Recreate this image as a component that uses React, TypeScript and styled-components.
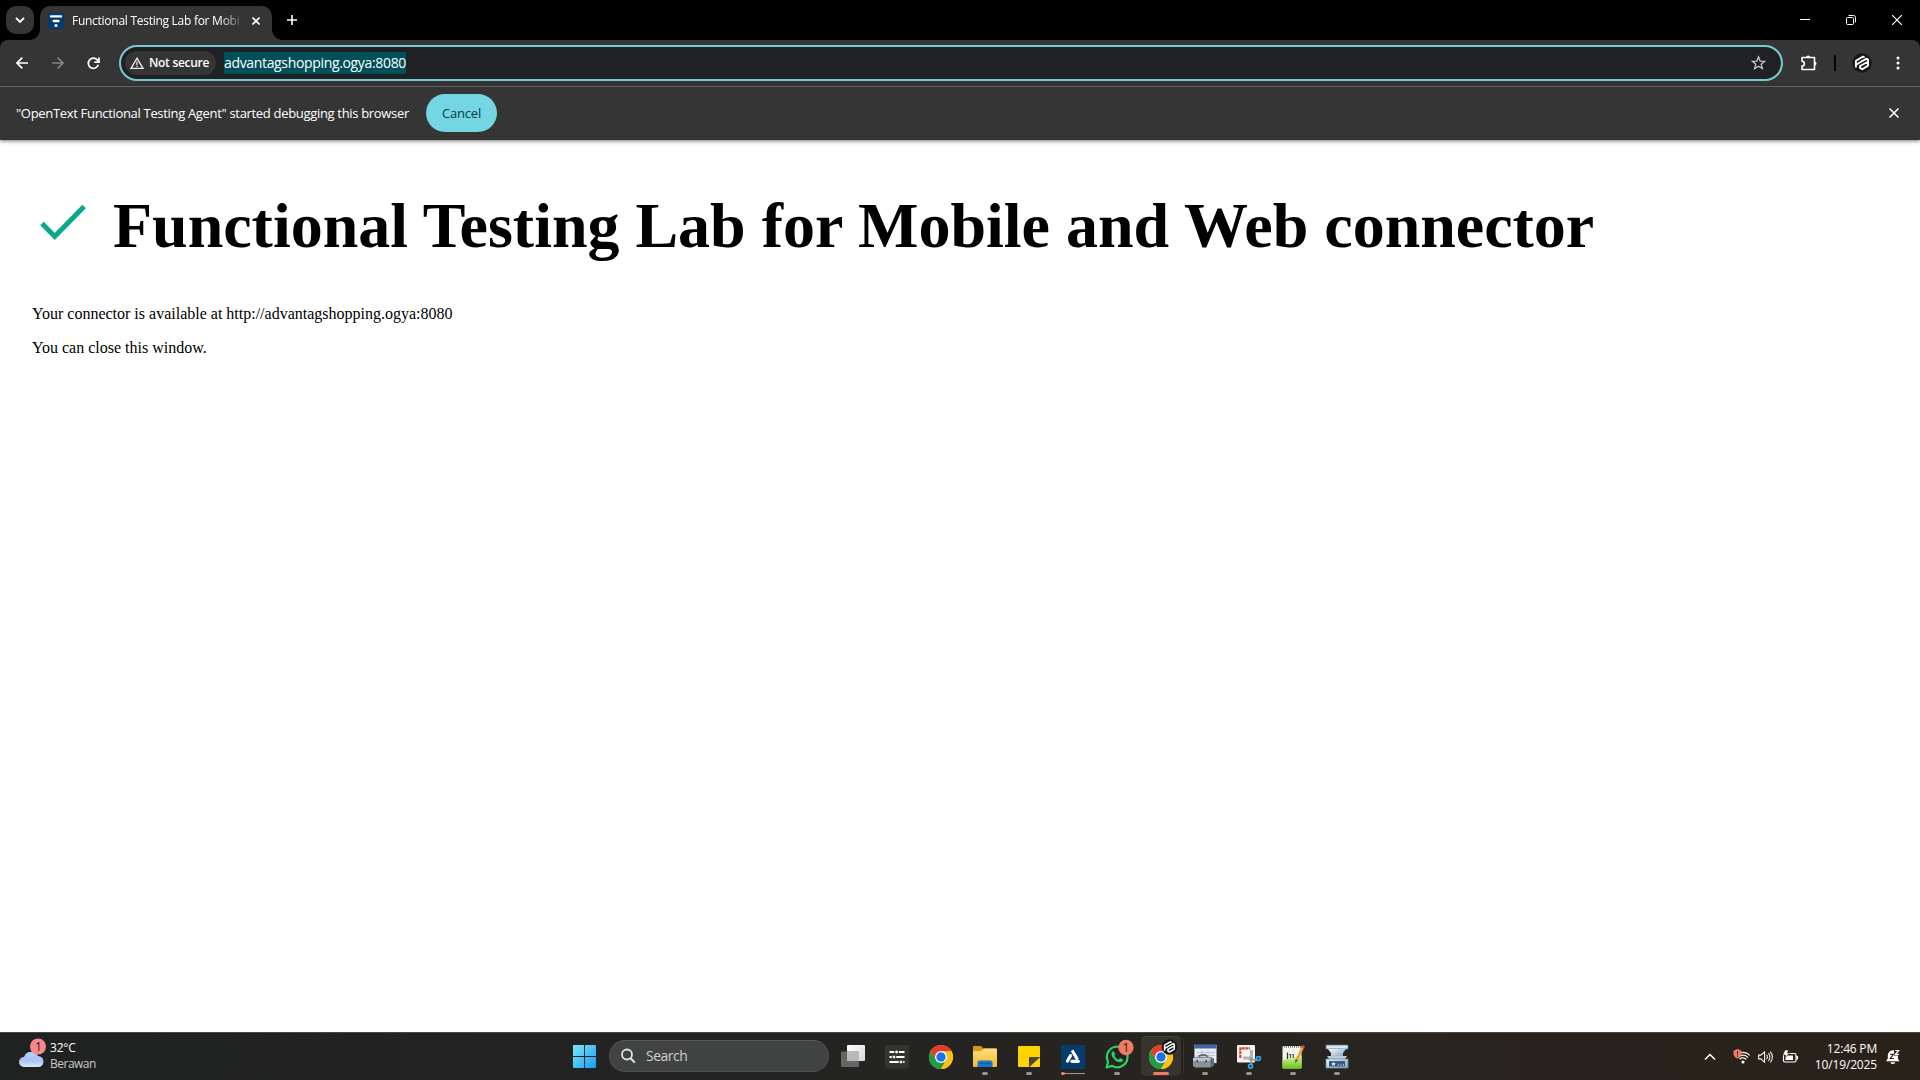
import React from "react";
import styled, { createGlobalStyle } from "styled-components";

const Global = createGlobalStyle`
  * { box-sizing: border-box; }
  html, body { margin: 0; padding: 0; background: #fff; overflow: hidden; }
`;

const UI = `"Segoe UI", "Open Sans", "Noto Sans", sans-serif`;

const Screen = styled.div`
  width: 1920px;
  height: 1080px;
  display: flex;
  flex-direction: column;
  font-family: ${UI};
  background: #fff;
  overflow: hidden;
`;

const Label = styled.span<{ $size: number; $track?: number; $color?: string; $weight?: number }>`
  font-size: ${(p) => p.$size}px;
  letter-spacing: ${(p) => p.$track ?? 0}px;
  color: ${(p) => p.$color ?? "#fff"};
  font-weight: ${(p) => p.$weight ?? 400};
  line-height: 16px;
  white-space: nowrap;
`;

const TabStrip = styled.header`
  height: 40px;
  flex: none;
  display: flex;
  align-items: flex-start;
  background: #000;
  padding: 6px 0 0 6px;
`;

const TabSearch = styled.button`
  width: 28px;
  height: 28px;
  border: 0;
  padding: 0;
  border-radius: 10px;
  background: #353535;
  display: grid;
  place-items: center;
`;

const Tab = styled.div`
  position: relative;
  width: 232px;
  height: 34px;
  margin-left: 6px;
  padding: 0 6px 4px 8px;
  display: flex;
  align-items: center;
  background: #353535;
  border-radius: 10px 10px 0 0;
  &::before, &::after {
    content: "";
    position: absolute;
    bottom: 0;
    width: 10px;
    height: 10px;
  }
  &::before { left: -10px; background: radial-gradient(circle at 0 0, transparent 9.5px, #353535 10px); }
  &::after { right: -10px; background: radial-gradient(circle at 100% 0, transparent 9.5px, #353535 10px); }
`;

const TabTitle = styled.div`
  width: 172px;
  margin-left: 8px;
  line-height: 16px;
  display: flex;
  mask-image: linear-gradient(to right, #000 148px, transparent 172px);
`;

const TabClose = styled.div`
  width: 20px;
  height: 20px;
  margin-left: 2px;
  display: grid;
  place-items: center;
`;

const NewTab = styled.div`
  width: 28px;
  height: 28px;
  margin-left: 6px;
  display: grid;
  place-items: center;
`;

const WindowButtons = styled.div`
  margin-left: auto;
  display: flex;
  height: 28px;
`;

const WindowButton = styled.div`
  width: 46px;
  display: grid;
  place-items: center;
`;

const ToolbarBack = styled.div`
  background: #000;
  flex: none;
`;

const Toolbar = styled.div`
  height: 47px;
  background: #353535;
  border-radius: 8px 8px 0 0;
  border-bottom: 1px solid #727272;
  display: flex;
  align-items: center;
`;

const NavIcons = styled.div`
  display: flex;
  padding-left: 4px;
  width: 119px;
`;

const IconCell = styled.div<{ $w: number }>`
  width: ${(p) => p.$w}px;
  display: flex;
  justify-content: center;
  align-items: center;
`;

const AddressBar = styled.div`
  width: 1664px;
  height: 36px;
  border: 2px solid #78c9d1;
  border-radius: 18px;
  background: #202125;
  display: flex;
  align-items: center;
  padding: 0 10px 0 4px;
`;

const SecurityChip = styled.div`
  width: 91px;
  height: 24px;
  border-radius: 12px;
  background: #353535;
  display: flex;
  align-items: center;
  gap: 5px;
  padding-left: 5px;
`;

const SelectedUrl = styled.div`
  margin-left: 8px;
  height: 22px;
  width: 182px;
  background: #004f59;
  display: flex;
  align-items: center;
`;

const Star = styled.div`
  margin-left: auto;
  height: 20px;
  display: flex;
  align-items: center;
`;

const ToolbarEnd = styled.div`
  flex: 1;
  display: flex;
  align-items: center;
  padding-left: 10px;
`;

const Separator = styled.div`
  width: 2px;
  height: 16px;
  background: #050505;
  margin: 0 9px 0 10px;
`;

const InfoBar = styled.div`
  height: 53px;
  flex: none;
  background: #353535;
  display: flex;
  align-items: center;
  padding: 0 16px 2px;
  z-index: 1;
  box-shadow: 0 1px 4px rgba(0, 0, 0, 0.55);
`;

const InfoText = styled.div`
  width: 410px;
  display: flex;
`;

const CancelButton = styled.button`
  width: 71px;
  height: 38px;
  border: 0;
  padding: 0;
  border-radius: 19px;
  background: #74d5e3;
  font-family: inherit;
`;

const InfoClose = styled.div`
  margin-left: auto;
  width: 20px;
  display: grid;
  place-items: center;
`;

const Page = styled.main`
  flex: 1;
  padding: 44px 32px;
  font-family: "Liberation Serif", "Times New Roman", serif;
  color: #000;
`;

const Heading = styled.div`
  display: flex;
  align-items: center;
  height: 84px;
  padding-left: 8px;
`;

const Title = styled.h1`
  margin: 0 0 0 25px;
  font-size: 64px;
  line-height: 74px;
  letter-spacing: -0.02px;
  white-space: nowrap;
`;

const Message = styled.p`
  margin: 0 0 16px;
  font-size: 16px;
  line-height: 18px;
`;

const Messages = styled.div`
  padding-top: 37px;
`;

const Taskbar = styled.footer`
  height: 48px;
  flex: none;
  display: flex;
  background: linear-gradient(to right, #202221 0%, #232423 40%, #28241f 70%, #282219 100%);
  border-top: 1px solid #484848;
`;

const Weather = styled.div`
  width: 562px;
  padding: 0 0 1px 18px;
  display: flex;
  align-items: center;
`;

const TextStack = styled.div<{ $end?: boolean }>`
  display: flex;
  flex-direction: column;
  align-items: ${(p) => (p.$end ? "flex-end" : "flex-start")};
`;

const AppButton = styled.div`
  position: relative;
  width: 44px;
  height: 47px;
  display: flex;
  justify-content: center;
  padding-top: 12px;
`;

const ActiveFrame = styled.div`
  position: absolute;
  left: 2px;
  top: 3px;
  width: 40px;
  height: 40px;
  border-radius: 5px;
  background: #37332f;
  box-shadow: inset 0 1px 0 #45413d, 2px 0 0 #24211d, 3px 0 0 #37332f;
`;

const Glyph = styled.svg`
  position: relative;
  overflow: visible;
  display: block;
`;

const RunMark = styled.div<{ $w: number; $c: string }>`
  position: absolute;
  bottom: 5px;
  left: calc(50% - ${(p) => p.$w / 2}px);
  width: ${(p) => p.$w}px;
  height: 3px;
  border-radius: 2px;
  background: ${(p) => p.$c};
`;

const ProgressMark = styled.div`
  position: absolute;
  bottom: 6px;
  left: 10px;
  width: 24px;
  height: 1px;
  background: #a29c98;
  &::before {
    content: "";
    position: absolute;
    left: 0;
    top: -1px;
    width: 4px;
    height: 3px;
    border-radius: 2px;
    background: #ef806a;
  }
`;

const SearchBox = styled.div`
  width: 220px;
  height: 32px;
  margin: 7px 2px 0 3px;
  border-radius: 16px;
  background: #414342;
  border: 1px solid #4d4f4e;
  border-top-color: #5a5c5b;
  display: flex;
  align-items: center;
  padding-left: 10px;
  gap: 10px;
`;

const Tray = styled.div`
  margin-left: auto;
  display: flex;
  align-items: center;
  padding: 0 19px 0 0;
`;

const Clock = styled.div`
  width: 70px;
  margin-right: 8px;
`;

function ChromeLogo() {
  return (
    <g>
      <circle cx="12" cy="12" r="12" fill="#fbc116" />
      <path d="M1.6 6A12 12 0 0 1 22.4 6H12L6.8 15Z" fill="#e33b2e" />
      <path d="M1.6 6A12 12 0 0 0 12 24L17.2 15H6.8Z" fill="#229a48" />
      <path d="M22.4 6A12 12 0 0 1 12 24L17.2 15 12 6Z" fill="#fbc116" />
      <circle cx="12" cy="12" r="6" fill="#fff" />
      <circle cx="12" cy="12" r="4.7" fill="#1a73e8" />
    </g>
  );
}

function ProfileMark() {
  return (
    <g>
      <circle cx="10" cy="10" r="9.7" fill="#161616" />
      <path
        d="M3.900 14.600V7.700L11 3.600 12.600 4.500M4.200 11.700 9.800 8.300M9.200 8.600 14.700 5.700 16 6.600V12.600L10.300 16.200 8 15V13L15.600 9"
        fill="none"
        stroke="#fff"
        strokeWidth="1.900"
        strokeLinejoin="round"
      />
    </g>
  );
}

const icons: Record<string, React.ReactNode> = {
  start: (
    <g fill="url(#winBlue)">
      <path d="M0 1a1 1 0 0 1 1-1H11V11H0ZM12 0H22a1 1 0 0 1 1 1V11H12ZM0 12H11V23H1a1 1 0 0 1-1-1ZM12 12H23V22a1 1 0 0 1-1 1H12Z" />
    </g>
  ),
  tasks: (
    <g>
      <rect x="6" y="0" width="18" height="16" rx="1" fill="url(#whiteGrad)" />
      <rect x="0" y="6.500" width="18" height="15.500" rx="1" fill="#777" fillOpacity=".8" />
      <path d="M6 6.500H18V16H6Z" fill="#b8b8b8" />
    </g>
  ),
  sliders: (
    <g>
      <rect x="0" y="0" width="24" height="23.500" fill="#333332" />
      <path d="M4.500 7H19.500M4.500 12H19.500M4.500 17H19.500" stroke="#fff" strokeWidth="2" />
      <g fill="#fff" stroke="#333332" strokeWidth="1">
        <circle cx="11.500" cy="7" r="1.900" />
        <circle cx="9" cy="12" r="1.900" />
        <circle cx="16" cy="17" r="1.900" />
      </g>
    </g>
  ),
  chrome: <ChromeLogo />,
  explorer: (
    <g>
      <path d="M0 2a1 1 0 0 1 1-1H8L10.500 3.500H23a1 1 0 0 1 1 1V12H0Z" fill="#d79b12" />
      <path d="M0 6H8L11 3.500H23a1 1 0 0 1 1 1V21a1 1 0 0 1-1 1H1a1 1 0 0 1-1-1Z" fill="url(#folder)" />
      <path d="M4.500 22V17.500a2 2 0 0 1 2-2H17.500a2 2 0 0 1 2 2V22Z" fill="#1279c9" />
      <path d="M7 18.500H17" stroke="#0b5696" strokeWidth="1" />
    </g>
  ),
  notes: (
    <g>
      <rect x="1" y="1" width="22" height="21" rx="1" fill="#fdd400" />
      <path d="M12 12H23V21a1 1 0 0 1-1 1H12Z" fill="#433d2b" />
      <path d="M23 12V21a1 1 0 0 1-1 1H12Z" fill="#fdd400" />
      <path d="M12 12H23L12 22.200Z" fill="#4a4435" />
    </g>
  ),
  agent: (
    <g>
      <rect x="0" y="0" width="24" height="24" fill="#063c6d" />
      <g stroke="#fff" strokeWidth="3.200" strokeLinecap="round">
        <path d="M11.700 6.500 16 13.600" />
        <path d="M9.600 10.600 6.500 16" />
        <path d="M11 16.300H17.300" />
      </g>
    </g>
  ),
  whatsapp: (
    <g>
      <path
        d="M1.500 22.500 3.100 16.700A10.300 10.300 0 1 1 7.200 20.900Z"
        fill="none"
        stroke="#2bd366"
        strokeWidth="2.200"
        strokeLinejoin="round"
      />
      <path
        d="M8.600 6.300C7.500 6 6.300 7.500 6.500 9.200 7 13 11 17 15 17.300 17 17.400 18.300 16 18 14.500L15.200 13 13.600 14.700C12 14 10.200 12.400 9.300 10.700L10.400 9.300Z"
        fill="#2bd366"
      />
      <circle cx="21" cy="2.500" r="7.700" fill="#f07c66" />
      <text x="21" y="7" textAnchor="middle" fontSize="12" fill="#1b1b1b" fontFamily={UI}>
        1
      </text>
    </g>
  ),
  chromeAgent: (
    <g>
      <ChromeLogo />
      <g transform="translate(12.500 -6) scale(.8)">
        <ProfileMark />
      </g>
    </g>
  ),
  toolbox: (
    <g>
      <rect x="1.500" y="0" width="22" height="18" fill="#e9edf4" stroke="#8b9db8" strokeWidth=".6" />
      <rect x="1.500" y="0" width="22" height="3.500" fill="#3d66ad" />
      <path d="M4 7.500H22M4 10.500H22M9 5V12M15 5V12" stroke="#a9bbd6" strokeWidth=".8" />
      <path d="M6 12.500C6 9 14.500 9 14.500 12.500" fill="none" stroke="#5d666c" strokeWidth="1.600" />
      <path d="M0 13 3 11.800H18L21 13.500V20.500L17 22.500H2L0 21Z" fill="#88939a" />
      <path d="M0 13H17.500V16H0Z" fill="#bcc5ca" />
      <path d="M17.500 14 21 13.500V20.500L17.500 22.500Z" fill="#5f6b72" />
      <rect x="3.500" y="15" width="1.500" height="2.500" fill="#3d464b" />
      <rect x="12.500" y="15" width="1.500" height="2.500" fill="#3d464b" />
    </g>
  ),
  snip: (
    <g>
      <rect x="0" y="0" width="18" height="17.500" rx="1" fill="#f5f5f5" />
      <path d="M3.300 13V3.300H13" fill="none" stroke="#d8432b" strokeWidth="2.200" strokeDasharray="3 .7" />
      <path d="M14.500 5V13H6" fill="none" stroke="#b5b5b5" strokeWidth="3" />
      <path d="M12 14.500 21 15M14 12.500 14.500 21" stroke="#8b9aa5" strokeWidth="1.800" />
      <circle cx="21.500" cy="13.500" r="2" fill="#163b50" stroke="#36b0e8" strokeWidth="1.500" />
      <circle cx="13.500" cy="21.300" r="2" fill="#163b50" stroke="#36b0e8" strokeWidth="1.500" />
    </g>
  ),
  notepad: (
    <g>
      <rect x="1.500" y="1" width="19" height="22.500" rx="1" fill="#f3f5ed" />
      <path d="M1.500 15 20.500 11V22.500a1 1 0 0 1-1 1H2.500a1 1 0 0 1-1-1Z" fill="url(#npp)" />
      <path d="M3 1.800H20" stroke="#79808a" strokeWidth="1.800" strokeDasharray="1 1" />
      <path d="M6.500 7.500V14" stroke="#333" strokeWidth="1.300" />
      <path d="M8 9.500H9.500V13M11 9.500H12.300V13" fill="none" stroke="#555" strokeWidth="1.200" />
      <path d="M21.600 2.500 15.800 15" stroke="#e3a23b" strokeWidth="2.800" />
      <path d="M14.500 14.300 14 18 17 15.500Z" fill="#5a4327" />
      <path d="M20.500 1 23.500 2.200" stroke="#d75353" strokeWidth="2" />
    </g>
  ),
  press: (
    <g>
      <path d="M1 0H23V4H1Z" fill="#dae7f1" stroke="#547692" strokeWidth=".8" />
      <path d="M3 4H21L18 8V12H6V8Z" fill="url(#steel)" />
      <path d="M2 11H22L20 14H4Z" fill="#b7ccdc" />
      <path d="M1 14H23V23H1Z" fill="url(#steel)" stroke="#6f8ca4" strokeWidth=".8" />
      <path d="M4 16H20V21.500H4Z" fill="#355b83" />
      <path d="m8.500 16.700.7 1.500h1.600l-1.300 1 .5 1.600-1.500-.9-1.500.9.500-1.600-1.300-1h1.600Z" fill="#fff" />
      <path d="M13 20H14M15.500 20H16.500M18 20H19" stroke="#fff" />
    </g>
  ),
};

type Run = "none" | "dot" | "active" | "progress";
const apps: { id: string; run: Run }[] = [
  { id: "tasks", run: "none" },
  { id: "sliders", run: "none" },
  { id: "chrome", run: "none" },
  { id: "explorer", run: "dot" },
  { id: "notes", run: "dot" },
  { id: "agent", run: "progress" },
  { id: "whatsapp", run: "dot" },
  { id: "chromeAgent", run: "active" },
  { id: "toolbox", run: "dot" },
  { id: "snip", run: "dot" },
  { id: "notepad", run: "dot" },
  { id: "press", run: "dot" },
];

function TaskApp({ id, run }: { id: string; run: Run }) {
  return (
    <AppButton>
      {run === "active" && <ActiveFrame />}
      <Glyph width="24" height="24" viewBox="0 0 24 24">
        {icons[id]}
      </Glyph>
      {run === "dot" && <RunMark $w={6} $c="#979491" />}
      {run === "active" && <RunMark $w={16} $c="#f07c66" />}
      {run === "progress" && <ProgressMark />}
    </AppButton>
  );
}

function Defs() {
  return (
    <defs>
      <linearGradient id="winBlue" gradientUnits="userSpaceOnUse" x1="0" y1="0" x2="23" y2="23">
        <stop offset="0" stopColor="#7fe6fb" />
        <stop offset="1" stopColor="#159df0" />
      </linearGradient>
      <linearGradient id="whiteGrad" x2="1" y2="1">
        <stop offset="0" stopColor="#fff" />
        <stop offset="1" stopColor="#d8d8d8" />
      </linearGradient>
      <linearGradient id="folder" x2="0" y2="1">
        <stop offset="0" stopColor="#ffdf7e" />
        <stop offset="1" stopColor="#f5b92c" />
      </linearGradient>
      <linearGradient id="npp" x2="0" y2="1">
        <stop offset="0" stopColor="#d9f59a" />
        <stop offset="1" stopColor="#67c51d" />
      </linearGradient>
      <linearGradient id="steel" x2="1" y2="1">
        <stop offset="0" stopColor="#f4f9fd" />
        <stop offset="1" stopColor="#7f9fba" />
      </linearGradient>
      <linearGradient id="cloud" x2="0" y2="1">
        <stop offset="0" stopColor="#b5cdf5" />
        <stop offset=".6" stopColor="#aac4f0" />
        <stop offset="1" stopColor="#dce9ff" />
      </linearGradient>
    </defs>
  );
}

export default function App() {
  return (
    <Screen>
      <Global />
      <TabStrip>
        <TabSearch>
          <svg width="10" height="8" viewBox="0 0 10 8">
            <path d="M1 1.800 5 5.800 9 1.800" fill="none" stroke="#fff" strokeWidth="1.900" />
          </svg>
        </TabSearch>
        <Tab>
          <svg width="16" height="16" viewBox="0 0 16 16">
            <rect width="16" height="16" fill="#073b6b" />
            <g stroke="#fff" strokeLinecap="round" strokeWidth="2.400">
              <path d="M3 3.400H13M5.700 8H10.500" />
            </g>
            <circle cx="8" cy="12.500" r="1.600" fill="#fff" />
          </svg>
          <TabTitle>
            <Label $size={12} $track={-0.27}>Functional Testing Lab for Mobi</Label>
          </TabTitle>
          <TabClose>
            <svg width="8" height="8" viewBox="0 0 8 8">
              <path d="M.5 .5 7.500 7.500M7.500 .5 .5 7.500" stroke="#fff" strokeWidth="1.600" />
            </svg>
          </TabClose>
        </Tab>
        <NewTab>
          <svg width="10" height="10" viewBox="0 0 10 10">
            <path d="M5 0V10M0 5H10" stroke="#fff" strokeWidth="1.600" />
          </svg>
        </NewTab>
        <WindowButtons>
          <WindowButton>
            <svg width="10" height="2" viewBox="0 0 10 2"><path d="M0 .5H10" stroke="#fff" /></svg>
          </WindowButton>
          <WindowButton>
            <svg width="10" height="10" viewBox="0 0 10 10">
              <g fill="none" stroke="#fff">
                <rect x=".5" y="2.500" width="7" height="7" rx="1" />
                <path d="M2.500 .5H7.500A2 2 0 0 1 9.500 2.500V7.500" />
              </g>
            </svg>
          </WindowButton>
          <WindowButton>
            <svg width="10" height="10" viewBox="0 0 10 10">
              <path d="M0 0 10 10M10 0 0 10" stroke="#fff" strokeWidth="1.200" />
            </svg>
          </WindowButton>
        </WindowButtons>
      </TabStrip>

      <ToolbarBack>
        <Toolbar>
          <NavIcons>
            <IconCell $w={36}>
              <svg width="12" height="12" viewBox="0 0 12 12">
                <path d="M12 6H1.200M6.300 .7 1 6 6.300 11.300" fill="none" stroke="#fff" strokeWidth="1.700" />
              </svg>
            </IconCell>
            <IconCell $w={36}>
              <svg width="12" height="12" viewBox="0 0 12 12">
                <path d="M0 6H10.800M5.700 .7 11 6 5.700 11.300" fill="none" stroke="#838383" strokeWidth="1.700" />
              </svg>
            </IconCell>
            <IconCell $w={35}>
              <svg width="13" height="13" viewBox="0 0 13 13">
                <path d="M11.300 7.800A5.100 5.100 0 1 1 10.600 3.300L11.600 4.500" fill="none" stroke="#fff" strokeWidth="1.700" />
                <path d="M12 .5V5.200H7.300" fill="none" stroke="#fff" strokeWidth="1.700" />
              </svg>
            </IconCell>
          </NavIcons>
          <AddressBar>
            <SecurityChip>
              <svg width="14" height="12" viewBox="0 0 14 12">
                <path d="M7 1.200 13 11.400H1Z" fill="none" stroke="#eee" strokeWidth="1.300" />
                <path d="M7 4.500V8M7 8.700V10" stroke="#eee" strokeWidth="1.300" />
              </svg>
              <Label $size={12} $weight={600} $track={-0.3}>Not secure</Label>
            </SecurityChip>
            <SelectedUrl>
              <Label $size={14} $track={-0.34}>advantagshopping.ogya:8080</Label>
            </SelectedUrl>
            <Star>
              <svg width="20" height="16" viewBox="0 0 20 16">
                <path d="m7.500 2 1.700 4.100 4.400.3-3.400 2.900 1.100 4.300-3.800-2.400-3.800 2.400 1.100-4.300L1.400 6.400l4.400-.3Z" fill="none" stroke="#c7c7c7" strokeWidth="1.300" />
              </svg>
            </Star>
          </AddressBar>
          <ToolbarEnd>
            <IconCell $w={31}>
              <svg width="18" height="18" viewBox="0 0 18 18">
                <path d="M2 3.500H14.500V15.500H2V12A2.300 2.300 0 0 0 2 7.300Z" fill="none" stroke="#fff" strokeWidth="1.600" strokeLinejoin="round" />
                <path d="M6.200 3.500A2 2 0 0 1 10.200 3.500ZM14.500 7.500A2 2 0 0 1 14.500 11.500Z" fill="#fff" />
              </svg>
            </IconCell>
            <Separator />
            <IconCell $w={34}>
              <svg width="20" height="20" viewBox="0 0 20 20"><ProfileMark /></svg>
            </IconCell>
            <IconCell $w={38}>
              <svg width="4" height="14" viewBox="0 0 4 14">
                <g fill="#fff">
                  <circle cx="2" cy="2" r="1.500" />
                  <circle cx="2" cy="7" r="1.500" />
                  <circle cx="2" cy="12" r="1.500" />
                </g>
              </svg>
            </IconCell>
          </ToolbarEnd>
        </Toolbar>
      </ToolbarBack>

      <InfoBar>
        <InfoText>
          <Label $size={13} $track={-0.32}>"OpenText Functional Testing Agent" started debugging this browser</Label>
        </InfoText>
        <CancelButton>
          <Label $size={13} $track={-0.2} $color="#063c46">Cancel</Label>
        </CancelButton>
        <InfoClose>
          <svg width="10" height="10" viewBox="0 0 10 10">
            <path d="M.5 .5 9.500 9.500M9.500 .5 .5 9.500" stroke="#fff" strokeWidth="1.500" />
          </svg>
        </InfoClose>
      </InfoBar>

      <Page>
        <Heading>
          <svg width="48" height="48" viewBox="0 0 48 48">
            <path d="M1.700 19.800 14.400 32.700 43.800 2.700" transform="translate(.3 1.800)" fill="none" stroke="#0aa887" strokeWidth="5" />
          </svg>
          <Title>Functional Testing Lab for Mobile and Web connector</Title>
        </Heading>
        <Messages>
          <Message>Your connector is available at http://advantagshopping.ogya:8080</Message>
          <Message>You can close this window.</Message>
        </Messages>
      </Page>

      <Taskbar>
        <Weather>
          <Glyph width="32" height="32" viewBox="0 0 32 32">
            <path d="M6 27a5 5 0 0 1 0-10A7.500 7.500 0 0 1 20 16a5.500 5.500 0 0 1 0 11Z" fill="url(#cloud)" />
            <circle cx="20" cy="6.500" r="8" fill="#f9888d" />
            <text x="20.500" y="11" textAnchor="middle" fontSize="12" fill="#1b1b1b" fontFamily={UI}>1</text>
          </Glyph>
          <TextStack>
            <Label $size={12} $track={-0.2}>32°C</Label>
            <Label $size={12} $track={-0.5} $color="#c9c9c9">Berawan</Label>
          </TextStack>
        </Weather>
        <AppButton>
          <Glyph width="23" height="23" viewBox="0 0 23 23">
            <Defs />
            {icons.start}
          </Glyph>
        </AppButton>
        <SearchBox>
          <svg width="16" height="16" viewBox="0 0 16 16">
            <circle cx="7" cy="6.500" r="5" fill="none" stroke="#e2e2e2" strokeWidth="1.800" />
            <path d="M10.600 10.200 14.800 14.600" stroke="#e2e2e2" strokeWidth="2" />
          </svg>
          <Label $size={14} $track={-0.5} $color="#cfcfcf">Search</Label>
        </SearchBox>
        {apps.map((a) => (
          <TaskApp key={a.id} id={a.id} run={a.run} />
        ))}
        <Tray>
          <IconCell $w={32}>
            <svg width="12" height="8" viewBox="0 0 12 8">
              <path d="M1 6.500 6 1.500 11 6.500" fill="none" stroke="#fff" strokeWidth="1.500" />
            </svg>
          </IconCell>
          <IconCell $w={32}>
            <svg width="18" height="16" viewBox="0 0 18 16">
              <g fill="none" stroke="#f4f2f0" strokeWidth="1.200">
                <path d="M8 3.600A9.500 9.500 0 0 1 16.800 6.300" />
                <path d="M7 7A6.900 6.900 0 0 1 15 8.500" />
                <path d="M6.500 10.200A4.600 4.600 0 0 1 13.300 10.600" />
              </g>
              <circle cx="10" cy="13" r="1.600" fill="#fff" />
              <path d="M4.500 0 8.500 1.700V5C8.500 7.500 6 9 4.500 9.700 3 9 .5 7.500 .5 5V1.700Z" fill="#ef7d68" />
              <path d="M4.500 2.200V5.500M4.500 6.500V7.700" stroke="#33241e" />
            </svg>
          </IconCell>
          <IconCell $w={16}>
            <svg width="17" height="14" viewBox="0 0 17 14">
              <path d="M.7 5V9H3L7 12.500V1.500L3 5ZM9 4.800A3 3 0 0 1 9 9.200M11 2.900A6 6 0 0 1 11 11.100M13 1.200A8.500 8.500 0 0 1 13 12.800" fill="none" stroke="#fff" strokeWidth="1.100" />
            </svg>
          </IconCell>
          <IconCell $w={33}>
            <svg width="17" height="14" viewBox="0 0 17 14">
              <rect x="1.500" y="3.500" width="12.500" height="8.500" rx="1.500" fill="none" stroke="#fff" strokeWidth="1.200" />
              <path d="M3.500 5.500H11V10H3.500Z" fill="#fff" />
              <path d="M14.500 6H16V9.500H14.500Z" fill="#fff" />
              <path d="M3 0H6.500L5.500 3H7.500L3 8 3.500 5H.8Z" fill="#fff" stroke="#27221b" strokeWidth=".6" />
            </svg>
          </IconCell>
          <Clock>
            <TextStack $end>
              <Label $size={12} $track={-0.2}>12:46 PM</Label>
              <Label $size={12} $track={-0.15}>10/19/2025</Label>
            </TextStack>
          </Clock>
          <svg width="16" height="16" viewBox="0 0 16 16">
            <path d="M8 1.200A5.300 5.300 0 0 0 2.800 6.400V9.500L1 12.300H14.500L13 10V5.500L11 1.800Z" fill="#fff" />
            <path d="M5.300 13.200H10.300A2.600 2.600 0 0 1 5.300 13.200Z" fill="#fff" />
            <path d="M5.300 5.300H8.500L5.300 9.500H8.800" fill="none" stroke="#29241d" strokeWidth="1.200" />
            <path d="M9 0H16V6.500H9Z" fill="#29241d" />
            <path d="M10.300 1.500H13.700L10.300 5.300H14" fill="none" stroke="#fff" strokeWidth="1.200" />
          </svg>
        </Tray>
      </Taskbar>
    </Screen>
  );
}
